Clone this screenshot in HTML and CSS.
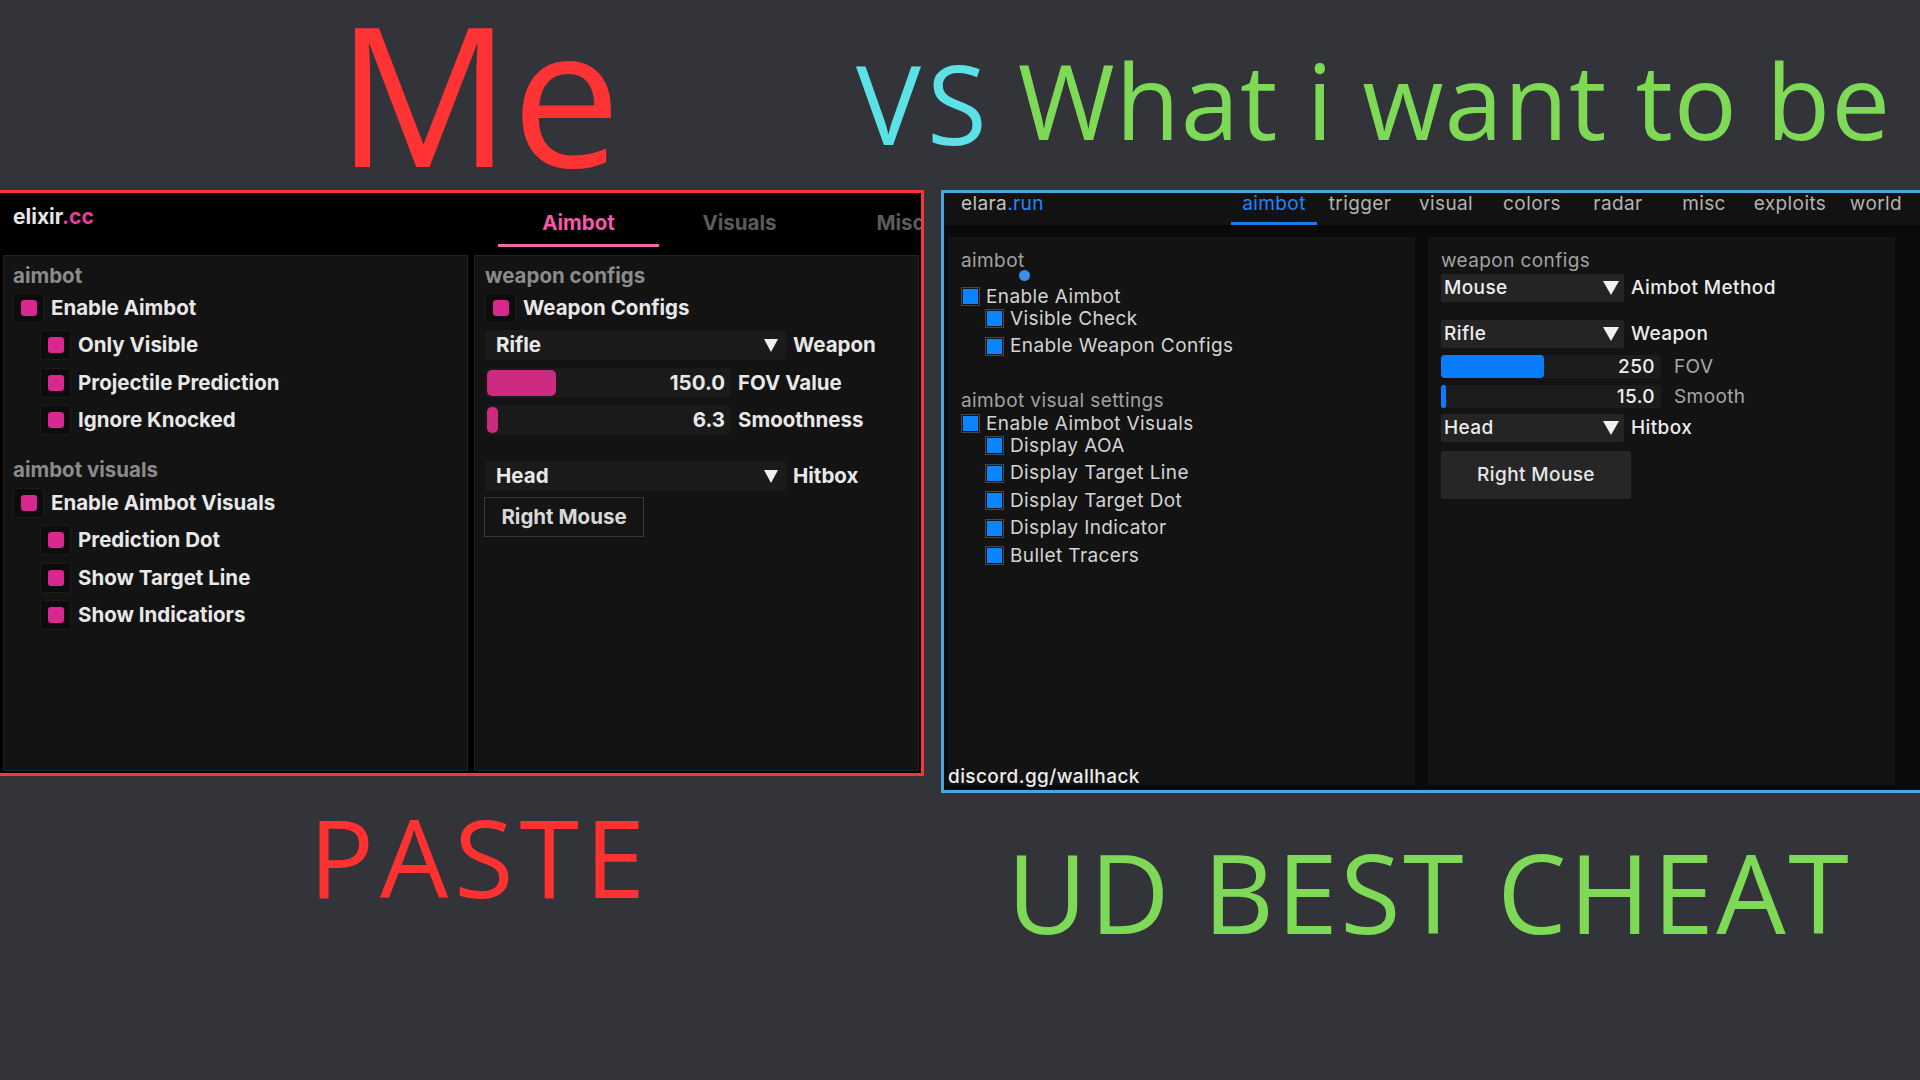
FILE: index.html
```html
<!DOCTYPE html>
<html lang="en">
<head>
<meta charset="utf-8">
<title>Me vs What i want to be</title>
<link rel="stylesheet" href="styles.css">
</head>
<body>
<div class="page">
  <header class="titles">
    <div class="t-me">Me</div>
    <div class="t-vs">VS</div>
    <div class="t-want">What i want to be</div>
  </header>

  <main class="panels">
    <section class="elixir">
      <div class="ex-head">
        <div class="ex-logo">elixir<span class="ex-pink">.cc</span></div>
        <nav class="ex-tabs">
          <div class="ex-tab active">Aimbot</div>
          <div class="ex-tab">Visuals</div>
          <div class="ex-tab">Misc</div>
        </nav>
      </div>
      <div class="ex-body">
        <div class="ex-col ex-col-left">
          <div class="ex-label">aimbot</div>
          <div class="ex-row"><span class="ex-check"><i></i></span><span>Enable Aimbot</span></div>
          <div class="ex-row sub"><span class="ex-check"><i></i></span><span>Only Visible</span></div>
          <div class="ex-row sub"><span class="ex-check"><i></i></span><span>Projectile Prediction</span></div>
          <div class="ex-row sub"><span class="ex-check"><i></i></span><span>Ignore Knocked</span></div>
          <div class="ex-label sect">aimbot visuals</div>
          <div class="ex-row"><span class="ex-check"><i></i></span><span>Enable Aimbot Visuals</span></div>
          <div class="ex-row sub"><span class="ex-check"><i></i></span><span>Prediction Dot</span></div>
          <div class="ex-row sub"><span class="ex-check"><i></i></span><span>Show Target Line</span></div>
          <div class="ex-row sub"><span class="ex-check"><i></i></span><span>Show Indicatiors</span></div>
        </div>
        <div class="ex-col ex-col-right">
          <div class="ex-label">weapon configs</div>
          <div class="ex-row"><span class="ex-check"><i></i></span><span>Weapon Configs</span></div>
          <div class="ex-row"><div class="ex-drop"><span>Rifle</span><b class="ex-tri"></b></div><span>Weapon</span></div>
          <div class="ex-row"><div class="ex-slider"><div class="ex-fill" style="width:69px"></div><span class="ex-val">150.0</span></div><span>FOV Value</span></div>
          <div class="ex-row"><div class="ex-slider"><div class="ex-fill" style="width:11px"></div><span class="ex-val">6.3</span></div><span>Smoothness</span></div>
          <div class="ex-row head"><div class="ex-drop"><span>Head</span><b class="ex-tri"></b></div><span>Hitbox</span></div>
          <div class="ex-btn">Right Mouse</div>
        </div>
      </div>
    </section>

    <section class="elara">
      <div class="el-head">
        <div class="el-logo">elara<span class="el-blue">.run</span></div>
        <nav class="el-tabs">
          <div class="el-tab active">aimbot</div>
          <div class="el-tab">trigger</div>
          <div class="el-tab">visual</div>
          <div class="el-tab">colors</div>
          <div class="el-tab">radar</div>
          <div class="el-tab">misc</div>
          <div class="el-tab">exploits</div>
          <div class="el-tab">world</div>
        </nav>
      </div>
      <div class="el-body">
        <div class="el-col">
          <span class="el-dot"></span>
          <div class="el-label first">aimbot</div>
          <div class="el-row main"><span class="el-check"></span><span>Enable Aimbot</span></div>
          <div class="el-row sub"><span class="el-check"></span><span>Visible Check</span></div>
          <div class="el-row sub"><span class="el-check"></span><span>Enable Weapon Configs</span></div>
          <div class="el-label sect">aimbot visual settings</div>
          <div class="el-row main"><span class="el-check"></span><span>Enable Aimbot Visuals</span></div>
          <div class="el-row sub"><span class="el-check"></span><span>Display AOA</span></div>
          <div class="el-row sub"><span class="el-check"></span><span>Display Target Line</span></div>
          <div class="el-row sub"><span class="el-check"></span><span>Display Target Dot</span></div>
          <div class="el-row sub"><span class="el-check"></span><span>Display Indicator</span></div>
          <div class="el-row sub"><span class="el-check"></span><span>Bullet Tracers</span></div>
          <div class="el-foot">discord.gg/wallhack</div>
        </div>
        <div class="el-col">
          <div class="el-label">weapon configs</div>
          <div class="el-field f-mouse"><div class="el-drop"><span>Mouse</span><b class="el-tri"></b></div><span class="el-strong">Aimbot Method</span></div>
          <div class="el-field f-rifle"><div class="el-drop"><span>Rifle</span><b class="el-tri"></b></div><span class="el-strong">Weapon</span></div>
          <div class="el-field f-fov"><div class="el-slider"><div class="el-fill" style="width:103px"></div><span class="el-val">250</span></div><span class="el-dim">FOV</span></div>
          <div class="el-field f-smooth"><div class="el-slider"><div class="el-fill" style="width:5px"></div><span class="el-val">15.0</span></div><span class="el-dim">Smooth</span></div>
          <div class="el-field f-head"><div class="el-drop"><span>Head</span><b class="el-tri"></b></div><span class="el-strong">Hitbox</span></div>
          <div class="el-btn">Right Mouse</div>
        </div>
      </div>
    </section>
  </main>

  <footer class="captions">
    <div class="c-left"><span class="c-paste">PASTE</span></div>
    <div class="c-right"><span class="c-ud">UD BEST CHEAT</span></div>
  </footer>
</div>
</body>
</html>
```
FILE: styles.css
```css
* { box-sizing: border-box; margin: 0; padding: 0; }
html, body { width: 1920px; height: 1080px; overflow: hidden; }
body { background: #333439; font-family: "Open Sans", "Liberation Sans", sans-serif; }
.page { width: 1920px; height: 1080px; display: flex; flex-direction: column; }

/* titles */
.titles { height: 190px; flex: none; display: flex; align-items: flex-start; white-space: nowrap; }
.t-me { font-size: 195px; line-height: 184px; color: #ff3333; margin-left: 336px; }
.t-vs { font-size: 109px; line-height: 109px; color: #5ce1e6; padding-top: 48px; margin-left: 235px; letter-spacing: 6px; }
.t-want { font-size: 105px; line-height: 105px; color: #7ed957; padding-top: 47px; margin-left: 25px; letter-spacing: 0.9px; }

/* panels row */
.panels { height: 603px; flex: none; display: flex; align-items: flex-start; }

/* elixir */
.elixir { flex: none; margin-left: -3px; width: 927px; height: 586px; border: 3px solid #ff3333; background: #000; display: flex; flex-direction: column; overflow: hidden; font-family: Inter, "Liberation Sans", sans-serif; font-weight: 700; font-size: 20.5px; color: #e8e8e8; }
.ex-head { height: 62px; flex: none; display: flex; overflow: hidden; }
.ex-logo { width: 498px; flex: none; padding: 12px 0 0 13px; font-size: 21px; line-height: 24px; color: #e6e6e6; }
.ex-pink { color: #e0409a; }
.ex-tabs { display: flex; flex: none; }
.ex-tab { width: 161px; flex: none; height: 54px; padding-top: 17.5px; line-height: 24px; text-align: center; color: #5c5c5c; border-bottom: 3px solid transparent; }
.ex-tab.active { color: #f05aa6; border-bottom-color: #f06aaa; }
.ex-body { flex: 1; display: flex; gap: 6px; padding: 0 2px 2px 3px; }
.ex-col { background: #131313; border: 1px solid #222; display: flex; flex-direction: column; padding-top: 7.5px; }
.ex-col-left { width: 465px; padding-left: 9px; }
.ex-col-right { width: 445px; padding-left: 10px; }
.ex-label { line-height: 24px; color: #8b8b8b; margin-bottom: 5.5px; }
.ex-label.sect { margin-top: 15.2px; margin-bottom: 6.5px; }
.ex-row { height: 30px; flex: none; display: flex; align-items: center; gap: 7px; margin-bottom: 7.33px; white-space: nowrap; line-height: 24px; }
.ex-row.sub { margin-left: 27px; }
.ex-row.head { margin-top: 18.7px; margin-bottom: 5.5px; }
.ex-check { width: 31px; height: 30px; flex: none; background: #0c0c0c; border: 1px solid #1c1c1c; border-radius: 3px; display: flex; align-items: center; justify-content: center; }
.ex-check i { width: 16px; height: 16px; background: #d8278f; border-radius: 3px; }
.ex-drop { width: 301px; height: 30px; flex: none; background: #1b1b1b; border-radius: 4px; display: flex; align-items: center; justify-content: space-between; padding: 0 8px 0 11px; }
.ex-tri { width: 0; height: 0; border-left: 7.5px solid transparent; border-right: 7.5px solid transparent; border-top: 13px solid #f0f0f0; }
.ex-slider { width: 246px; height: 30px; flex: none; background: #1a1a1a; border-radius: 4px; display: flex; align-items: center; padding: 2px 6px 2px 2px; }
.ex-fill { height: 26px; background: #cc2a7e; border-radius: 5px; }
.ex-val { margin-left: auto; }
.ex-btn { width: 160px; height: 40px; flex: none; margin-left: -1px; border: 1px solid #383838; background: #141414; color: #d8d8d8; display: flex; align-items: center; justify-content: center; line-height: 24px; }

/* elara */
.elara { flex: none; margin-left: 17px; width: 982px; height: 603px; border: 3px solid #4ba6de; background: #0a0a0a; display: flex; flex-direction: column; font-family: Inter, "Liberation Sans", sans-serif; font-size: 19px; letter-spacing: 0.4px; line-height: 22px; color: #d4d4d4; }
.el-head { height: 32px; flex: none; display: flex; background: #121212; }
.el-logo { width: 287px; flex: none; padding-left: 17px; color: #c4c4c4; }
.el-blue { color: #2089ff; }
.el-tabs { display: flex; }
.el-tab { width: 86px; flex: none; height: 32px; text-align: center; color: #b2b2b2; border-bottom: 3px solid transparent; }
.el-tab.active { color: #1d86ff; border-bottom-color: #1a7cf0; }
.el-body { flex: 1; display: flex; gap: 13px; padding: 12px 0 5px 4px; }
.el-col { width: 467px; flex: none; position: relative; background: #131313; padding: 13px 0 0 13px; display: flex; flex-direction: column; white-space: nowrap; }
.el-dot { position: absolute; left: 70.5px; top: 32.5px; width: 11px; height: 11px; border-radius: 50%; background: #3d8ee8; }
.el-label { color: #a2a2a2; }
.el-label.first { margin-bottom: 15px; }
.el-label.sect { margin-top: 34.5px; margin-bottom: 2px; }
.el-row { height: 19px; flex: none; display: flex; align-items: center; gap: 6px; }
.el-row.sub { margin-left: 24px; margin-top: 8.5px; }
.el-row.main + .el-row.sub { margin-top: 3px; }
.el-check { width: 19px; height: 19px; flex: none; background: #0a84ff; box-shadow: inset 0 0 0 1px #474747, inset 0 0 0 2px #161616; }
.el-foot { margin-top: auto; margin-left: -13px; margin-bottom: -3px; color: #ececec; font-weight: 500; }
.el-field { display: flex; align-items: center; gap: 7px; flex: none; }
.f-mouse { margin-top: 2px; }
.f-rifle { margin-top: 18px; }
.f-fov { margin-top: 7px; gap: 13px; }
.f-smooth { margin-top: 7px; gap: 13px; }
.f-head { margin-top: 6px; }
.el-drop { width: 183px; height: 28px; flex: none; background: #242424; border-radius: 2px; display: flex; align-items: center; justify-content: space-between; padding: 0 5px 0 3px; color: #ededed; font-weight: 500; }
.el-tri { width: 0; height: 0; border-left: 8px solid transparent; border-right: 8px solid transparent; border-top: 14px solid #f2f2f2; }
.el-strong { color: #ececec; font-weight: 500; }
.el-dim { color: #a8a8a8; }
.el-slider { width: 220px; height: 23px; flex: none; background: #1c1c1c; border-radius: 3px; display: flex; align-items: center; padding-right: 6px; }
.el-fill { height: 23px; background: #0a7cff; border-radius: 4px; }
.el-val { margin-left: auto; color: #f0f0f0; font-weight: 500; }
.el-btn { margin-top: 9px; width: 190px; height: 48px; flex: none; background: #262626; border-radius: 2px; display: flex; align-items: center; justify-content: center; color: #e6e6e6; font-weight: 500; }

/* captions */
.captions { flex: 1; display: flex; align-items: flex-start; white-space: nowrap; }
.c-left { width: 941px; flex: none; padding-left: 309px; }
.c-right { flex: 1; padding-left: 66px; }
.c-paste { display: inline-block; font-size: 108px; line-height: 108px; padding-top: 10px; color: #ff3131; letter-spacing: 6px; }
.c-ud { display: inline-block; font-size: 110px; line-height: 110px; padding-top: 43px; color: #7ed957; letter-spacing: 2.5px; }
```
